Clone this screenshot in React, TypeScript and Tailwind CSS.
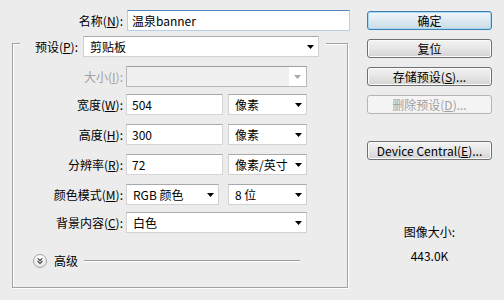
import React from 'react';
import { ChevronsDown } from 'lucide-react';

function Arrow({ disabled = false }: { disabled?: boolean }) {
  return (
    <svg width="7" height="4" viewBox="0 0 7 4" className="shrink-0">
      <path d="M0 0h7L3.5 4z" fill={disabled ? '#a8a8a8' : '#000'} />
    </svg>
  );
}

function Select({ value, width, disabled = false }: { value: React.ReactNode; width: string; disabled?: boolean }) {
  if (disabled) {
    return (
      <div className={`${width} h-[21px] flex border border-[#b8b8b8] border-t-[#a0a0a0] bg-[#f0f0f0]`}>
        <div className="flex-1" />
        <div className="w-[17px] bg-white flex items-center justify-center">
          <Arrow disabled />
        </div>
      </div>
    );
  }
  return (
    <div className={`${width} h-[21px] flex items-center justify-between bg-white border border-[#d2d2d2] border-t-[#a9a9a9] pl-[6px] pr-[4px]`}>
      <span className="leading-none">{value}</span>
      <Arrow />
    </div>
  );
}

function Input({ value, width }: { value: string; width: string }) {
  return (
    <div className={`${width} h-[21px] flex items-center bg-white border border-[#d6d6d6] border-t-[#a9a9a9] pl-[5px]`}>
      <span className="leading-none">{value}</span>
    </div>
  );
}

function Label({ children, disabled = false }: { children: React.ReactNode; disabled?: boolean }) {
  return (
    <div className={`w-[110px] text-right pr-0 leading-none ${disabled ? 'text-[#a0a0a0]' : 'text-black'}`}>{children}</div>
  );
}

function Btn({ children, primary = false, disabled = false, className = '' }: { children: React.ReactNode; primary?: boolean; disabled?: boolean; className?: string }) {
  const look = primary
    ? 'border-[#3c7fb1] bg-gradient-to-b from-[#f1f7fa] via-[#dde9f0] to-[#c9dce6] shadow-[inset_0_0_0_1px_#a8d8f3]'
    : disabled
    ? 'border-[#b5b5b5] bg-[#f4f4f4] text-[#a0a0a0]'
    : 'border-[#707070] bg-gradient-to-b from-[#f3f3f3] via-[#e6e6e6] to-[#d3d3d3] shadow-[inset_0_0_0_1px_#fbfbfb]';
  return (
    <div className={`w-[125px] h-[19px] rounded-[3px] border flex items-center justify-center leading-none ${look} ${className}`}>
      {children}
    </div>
  );
}

export default function App() {
  return (
    <div className="w-[504px] h-[300px] bg-[#ececec] flex text-[12px] text-black font-['Noto_Sans_CJK_SC',sans-serif] overflow-hidden">
      {/* Left column */}
      <div className="w-[367px] pt-[10px]">
        <div className="flex items-center">
          <div className="w-[123px] text-right leading-none">
            名称(<u>N</u>):
          </div>
          <div className="ml-[4px] w-[223px] h-[21px] flex items-center bg-white border border-[#b6d0e6] border-t-[#5088bc] pl-[4px]">
            <span className="leading-none">温泉banner</span>
          </div>
        </div>

        {/* Group box */}
        <div className="ml-[12px] mt-[12px] w-[336px] h-[245px] border border-[#a3a3a3] shadow-[inset_1px_1px_0_#fff,1px_1px_0_#fff]">
          <div className="-mt-[8px] ml-[7px] w-[306px] bg-[#ececec] flex items-center">
            <div className="w-[58px] text-right leading-none">
              预设(<u>P</u>):
            </div>
            <div className="ml-[5px]">
              <Select value="剪贴板" width="w-[236px]" />
            </div>
          </div>

          <div className="mt-[9px] flex items-center">
            <Label disabled>
              大小(<u>I</u>):
            </Label>
            <div className="ml-[3px]">
              <Select value="" width="w-[181px]" disabled />
            </div>
          </div>

          <div className="mt-[7px] flex items-center">
            <Label>
              宽度(<u>W</u>):
            </Label>
            <div className="ml-[3px] flex gap-[5px]">
              <Input value="504" width="w-[97px]" />
              <Select value="像素" width="w-[79px]" />
            </div>
          </div>

          <div className="mt-[9px] flex items-center">
            <Label>
              高度(<u>H</u>):
            </Label>
            <div className="ml-[3px] flex gap-[5px]">
              <Input value="300" width="w-[97px]" />
              <Select value="像素" width="w-[79px]" />
            </div>
          </div>

          <div className="mt-[9px] flex items-center">
            <Label>
              分辨率(<u>R</u>):
            </Label>
            <div className="ml-[3px] flex gap-[5px]">
              <Input value="72" width="w-[97px]" />
              <Select value="像素/英寸" width="w-[79px]" />
            </div>
          </div>

          <div className="mt-[9px] flex items-center">
            <Label>
              颜色模式(<u>M</u>):
            </Label>
            <div className="ml-[3px] flex gap-[9px]">
              <Select value="RGB 颜色" width="w-[93px]" />
              <Select value="8 位" width="w-[79px]" />
            </div>
          </div>

          <div className="mt-[7px] flex items-center">
            <Label>
              背景内容(<u>C</u>):
            </Label>
            <div className="ml-[3px]">
              <Select value="白色" width="w-[181px]" />
            </div>
          </div>

          <div className="mt-[21px] ml-[20px] flex items-center">
            <div className="w-[14px] h-[14px] rounded-full border border-[#a0a0a0] bg-gradient-to-b from-white to-[#e4e4e4] flex items-center justify-center">
              <ChevronsDown size={10} strokeWidth={2.5} color="#222" />
            </div>
            <span className="ml-[7px] leading-none">高级</span>
            <div className="ml-[6px] w-[216px] h-[2px] border-t border-[#9a9a9a] border-b border-b-white" />
          </div>
        </div>
      </div>

      {/* Right column */}
      <div className="w-[125px] pt-[11px] flex flex-col">
        <Btn primary>确定</Btn>
        <Btn className="mt-[9px]">复位</Btn>
        <Btn className="mt-[9px]">
          存储预设(<u>S</u>)...
        </Btn>
        <Btn disabled className="mt-[9px]">
          删除预设(<u>D</u>)...
        </Btn>
        <Btn className="mt-[27px]">
          Device Central(<u>E</u>)...
        </Btn>
        <div className="mt-[66px] text-center leading-none">图像大小:</div>
        <div className="mt-[12px] text-center leading-none">443.0K</div>
      </div>
    </div>
  );
}
